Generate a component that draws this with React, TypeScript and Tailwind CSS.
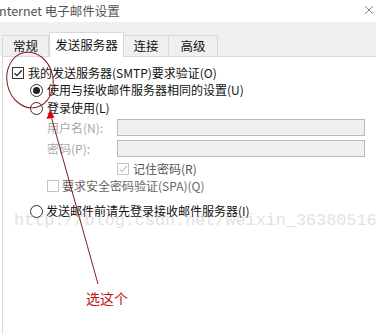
import React from 'react';

const font = { fontFamily: '"Noto Sans CJK SC", "Noto Sans", sans-serif' };

const Check = ({ checked, disabled }: { checked?: boolean; disabled?: boolean }) => (
  <span
    className={`relative inline-flex w-[12px] h-[12px] shrink-0 border bg-white ${disabled ? 'border-[#c4c4c4]' : 'border-[#333333]'}`}
  >
    {checked && (
      <svg viewBox="0 0 12 12" className="absolute -left-px -top-px w-[12px] h-[12px]">
        <path d="M2.5 6.2 L5 8.6 L9.8 3.2" fill="none" stroke={disabled ? '#c4c4c4' : '#222'} strokeWidth="1.3" />
      </svg>
    )}
  </span>
);

const Radio = ({ checked }: { checked?: boolean }) => (
  <span className="inline-flex w-[13px] h-[13px] shrink-0 rounded-full border border-[#333333] bg-white items-center justify-center">
    {checked && <span className="w-[7px] h-[7px] rounded-full bg-[#222]" />}
  </span>
);

const Tab = ({ label, active, w }: { label: string; active?: boolean; w: string }) => (
  <div
    className={`${w} flex items-center justify-center border-t border-l border-r border-[#d9d9d9] text-[12.5px] text-[#111] ${
      active ? 'h-[25px] bg-white -mb-px z-10 relative' : 'h-[21px] bg-[#f0f0f0] -ml-px'
    }`}
  >
    {label}
  </div>
);

export default function App() {
  return (
    <div className="relative w-[376px] h-[334px] bg-white overflow-hidden" style={font}>
      {/* title bar */}
      <div className="h-[22px] flex items-center justify-between pr-[2px]">
        <span className="text-[12.5px] text-[#555] -ml-[1px]">nternet 电子邮件设置</span>
        <svg width="10" height="10" viewBox="0 0 10 10" className="mb-[2px]">
          <path d="M1 1 L9 9 M9 1 L1 9" stroke="#888" strokeWidth="1" />
        </svg>
      </div>

      {/* tab band */}
      <div className="h-[34px] bg-[#f0f0f0] flex items-end pl-[3px]">
        <Tab label="常规" w="w-[47px]" />
        <Tab label="发送服务器" w="w-[75px]" active />
        <Tab label="连接" w="w-[46px]" />
        <Tab label="高级" w="w-[50px]" />
      </div>

      {/* content */}
      <div className="ml-[2px] h-[278px] border-l border-t border-[#d9d9d9] bg-white flex flex-col text-[12px] text-[#111] leading-none">
        <div className="h-[16px] mt-[8px] flex items-center pl-[9px] gap-[4px]">
          <Check checked />
          <span>我的发送服务器(SMTP)要求验证(O)</span>
        </div>
        <div className="h-[16px] mt-[1px] flex items-center pl-[27px] gap-[4px]">
          <Radio checked />
          <span>使用与接收邮件服务器相同的设置(U)</span>
        </div>
        <div className="h-[16px] mt-[2px] flex items-center pl-[27px] gap-[4px]">
          <Radio />
          <span>登录使用(L)</span>
        </div>
        <div className="h-[17px] mt-[3px] flex items-center pl-[44px]">
          <span className="w-[70px] text-[#a8a8a8]">用户名(N):</span>
          <div className="w-[248px] h-[17px] bg-[#f0f0f0] border border-[#b4b9c2]" />
        </div>
        <div className="h-[17px] mt-[4px] flex items-center pl-[44px]">
          <span className="w-[70px] text-[#a8a8a8]">密码(P):</span>
          <div className="w-[248px] h-[17px] bg-[#f0f0f0] border border-[#b4b9c2]" />
        </div>
        <div className="h-[16px] mt-[4px] flex items-center pl-[114px] gap-[4px]">
          <Check checked disabled />
          <span className="text-[#555]">记住密码(R)</span>
        </div>
        <div className="h-[16px] mt-[1px] flex items-center pl-[44px] gap-[3px]">
          <Check disabled />
          <span className="text-[#666]">要求安全密码验证(SPA)(Q)</span>
        </div>
        <div className="h-[16px] mt-[9px] flex items-center pl-[27px] gap-[3px] relative z-10">
          <Radio />
          <span>发送邮件前请先登录接收邮件服务器(I)</span>
        </div>
      </div>

      {/* csdn watermark */}
      <div
        className="absolute left-[14px] top-[208px] text-[16.8px] text-[#e2e2e2] whitespace-nowrap pointer-events-none"
        style={{ fontFamily: '"Liberation Mono", monospace' }}
      >
        http://blog.csdn.net/weixin_36380516
      </div>

      {/* red annotations */}
      <svg className="absolute inset-0 pointer-events-none z-20" width="376" height="334" viewBox="0 0 376 334">
        <ellipse cx="30" cy="80" rx="23" ry="28" transform="rotate(-12 30 80)" fill="none" stroke="#8b1c1c" strokeWidth="1" />
        <line x1="51" y1="116" x2="98" y2="284" stroke="#8b1c1c" strokeWidth="1" />
        <path d="M50 110 L46.5 119 L54.5 117.5 Z" fill="#e00000" />
      </svg>
      <span className="absolute left-[86px] top-[288px] text-[14px] text-[#c0141a] z-20">选这个</span>
    </div>
  );
}
